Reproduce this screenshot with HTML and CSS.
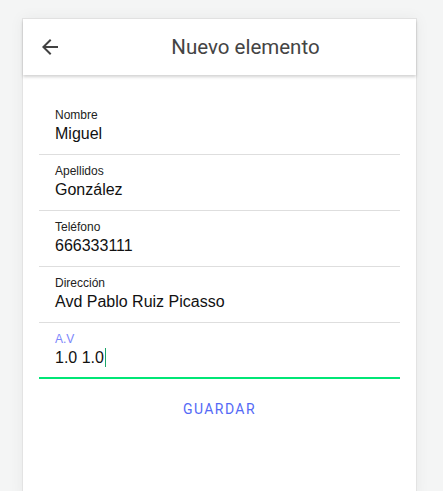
FILE: index.html
```html
<!DOCTYPE html>
<html lang="es">
<head>
<meta charset="utf-8">
<title>Nuevo elemento</title>
<link rel="stylesheet" href="styles.css">
</head>
<body>
<div class="card">
  <header class="toolbar">
    <button class="back" aria-label="Volver">
      <svg width="24" height="24" viewBox="0 0 24 24"><path d="M20 11H7.83l5.59-5.59L12 4l-8 8 8 8 1.41-1.41L7.83 13H20v-2z" fill="#424242"/></svg>
    </button>
    <h1 class="title">Nuevo elemento</h1>
  </header>
  <form class="form">
    <div class="field">
      <label class="label">Nombre</label>
      <div class="value">Miguel</div>
    </div>
    <div class="field">
      <label class="label">Apellidos</label>
      <div class="value">González</div>
    </div>
    <div class="field">
      <label class="label">Teléfono</label>
      <div class="value">666333111</div>
    </div>
    <div class="field">
      <label class="label">Dirección</label>
      <div class="value">Avd Pablo Ruiz Picasso</div>
    </div>
    <div class="field focused">
      <label class="label">A.V</label>
      <div class="value">1.0 1.0<span class="caret"></span></div>
    </div>
  </form>
  <div class="actions">
    <button class="save" type="button">Guardar</button>
  </div>
</div>
</body>
</html>
```
FILE: styles.css
```css
html, body {
  margin: 0;
  padding: 0;
  height: 100%;
}
body {
  background: #f4f5f5;
  font-family: "Liberation Sans", Arial, sans-serif;
  overflow: hidden;
}
.card {
  margin: 18px 0 0 22px;
  width: 393px;
  min-height: 480px;
  background: #fff;
  border: 1px solid #e3e3e3;
  border-bottom: none;
  box-shadow: 0 0 14px rgba(0, 0, 0, 0.05);
}
.toolbar {
  height: 56px;
  display: flex;
  align-items: center;
  padding-left: 15px;
  background: #fff;
  box-shadow: 0 2px 3px rgba(0, 0, 0, 0.18);
  position: relative;
}
.back {
  width: 24px;
  height: 24px;
  padding: 0;
  margin: 0;
  border: none;
  background: none;
  display: flex;
}
.title {
  flex: 1;
  margin: 0;
  padding-left: 13px;
  text-align: center;
  font-family: Roboto, "Liberation Sans", sans-serif;
  font-weight: 400;
  font-size: 20.5px;
  color: #444;
}
.form {
  padding: 24px 16px 0 16px;
}
.field {
  padding: 8px 16px 10px;
  border-bottom: 1px solid #dedede;
  display: flex;
  flex-direction: column;
  gap: 1px;
}
.label {
  font-size: 12px;
  line-height: 16px;
  color: #222;
}
.value {
  font-size: 16px;
  line-height: 20px;
  color: #111;
}
.field.focused {
  border-bottom: 2px solid #00e676;
  padding-bottom: 9px;
}
.field.focused .label {
  color: #7b86fb;
}
.caret {
  display: inline-block;
  width: 0;
  height: 19px;
  border-left: 1px solid #1aa56a;
  vertical-align: -4px;
  margin-left: 1px;
}
.actions {
  display: flex;
  justify-content: center;
  padding-top: 12px;
}
.save {
  height: 36px;
  padding: 0 16px;
  border: none;
  background: none;
  font-family: Roboto, "Liberation Sans", sans-serif;
  font-weight: 400;
  font-size: 14px;
  letter-spacing: 1.4px;
  text-transform: uppercase;
  color: #5469f6;
}
```
